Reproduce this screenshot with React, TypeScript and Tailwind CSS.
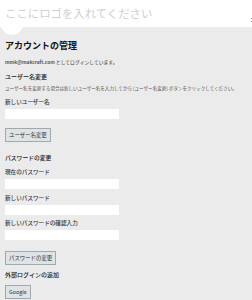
import React from 'react';

const font = { fontFamily: '"Noto Sans CJK JP", "Noto Sans", sans-serif' };

const Label = ({ text, mt }: { text: string; mt: string }) => (
  <div className={`${mt} h-[8px] leading-[8px] text-[5.6px] font-medium text-[#3a3a3a]`}>{text}</div>
);

const Field = () => (
  <input type="text" className="mt-[3px] block h-[10px] w-[114px] bg-white border-0 outline-none" />
);

const Btn = ({ text, mt }: { text: string; mt: string }) => (
  <button className={`${mt} block h-[14px] px-[3px] border border-[#a3a8ab] bg-[#dde3e6] text-[5.4px] leading-[12px] text-[#333]`}>
    {text}
  </button>
);

const App: React.FC = () => {
  return (
    <div className="w-full min-h-[300px] bg-[#ebebeb] overflow-hidden" style={font}>
      {/* Header */}
      <div className="relative h-[27px] bg-white">
        <div className="absolute left-[1px] top-[13px] h-[22px] w-[22px] rounded-full bg-white" />
        <div className="absolute right-0 top-[18px] h-[1px] w-[1px] bg-[#9a9a9a]" />
        <div className="absolute right-0 top-[21px] h-[1px] w-[1px] bg-[#9a9a9a]" />
        <div className="relative pl-[5px] pt-[5px] text-[11.4px] leading-[16px] text-[#cfcfcf]">
          ここにロゴを入れてください
        </div>
      </div>

      <div className="px-[5px] text-[#333]">
        <h1 className="mt-[13px] h-[12px] leading-[12px] text-[9px] font-bold text-[#111]">アカウントの管理</h1>
        <p className="mt-[6px] h-[8px] leading-[8px] text-[4.8px]">
          <span className="font-bold text-[#555]">mmk@makcraft.com</span> としてログインしています。
        </p>

        <h2 className="mt-[6px] h-[10px] leading-[10px] text-[6px] font-medium text-[#222]">ユーザー名変更</h2>
        <p className="mt-[2px] h-[8px] leading-[8px] text-[4.55px] whitespace-nowrap text-[#555]">
          ユーザー名を変更する場合は新しいユーザー名を入力してから [ユーザー名変更] ボタンをクリックしてください。
        </p>
        <Label text="新しいユーザー名" mt="mt-[6px]" />
        <Field />
        <Btn text="ユーザー名変更" mt="mt-[9px]" />

        <h2 className="mt-[11px] h-[10px] leading-[10px] text-[5.8px] font-medium text-[#222]">パスワードの変更</h2>
        <Label text="現在のパスワード" mt="mt-[5px]" />
        <Field />
        <Label text="新しいパスワード" mt="mt-[5px]" />
        <Field />
        <Label text="新しいパスワードの確認入力" mt="mt-[4px]" />
        <Field />
        <Btn text="パスワードの変更" mt="mt-[11px]" />

        <h2 className="mt-[5px] h-[10px] leading-[10px] text-[6px] font-medium text-[#222]">外部ログインの追加</h2>
        <Btn text="Google" mt="mt-[5px]" />
      </div>
    </div>
  );
};

export default App;
